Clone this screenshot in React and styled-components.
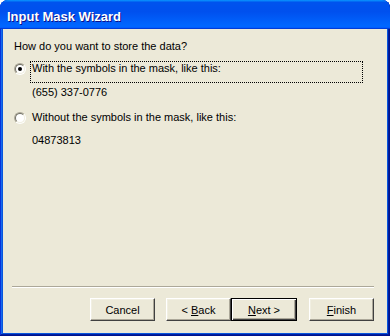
import React from 'react';
import styled, { createGlobalStyle } from 'styled-components';

const Global = createGlobalStyle`
  html, body { margin: 0; padding: 0; background: #ffffff; }
  body { font-family: "Liberation Sans", Arial, sans-serif; }
`;

const Window = styled.div`
  width: 390px;
  height: 336px;
  display: flex;
  flex-direction: column;
  background: #0855dd;
  border-radius: 8px 8px 0 0;
  box-shadow: inset -1px -1px #00138c, inset 1px 1px #0831d9,
    inset -2px -2px #001ea0, inset 2px 2px #166aee;
`;

const TitleBar = styled.div`
  flex: none;
  height: 29px;
  border-radius: 8px 8px 0 0;
  background: linear-gradient(180deg, #0997ff, #0053ee 8%, #0050ee 40%, #0066ff 88%, #0066ff 93%, #005bff 95%, #003dd7 96%, #003dd7);
  display: flex;
  align-items: center;
  padding: 3px 0 0 7px;
  box-sizing: border-box;
  color: #ffffff;
  font: bold 13px "Liberation Sans", sans-serif;
  text-shadow: 1px 1px #0f1089;
`;

const Body = styled.div`
  flex: 1;
  margin: 0 3px 3px 3px;
  background: #ece9d8;
  display: flex;
  flex-direction: column;
  font-size: 11px;
  line-height: 13px;
  color: #000000;
`;

const Content = styled.div`
  flex: 1;
  padding: 11px 0 0 11px;
  display: flex;
  flex-direction: column;
`;

const Question = styled.div`
  height: 13px;
`;

const OptionRow = styled.div`
  display: flex;
  align-items: flex-start;
  margin-top: ${(p) => p.$top}px;
`;

const Radio = styled.span`
  flex: none;
  width: 12px;
  height: 12px;
  box-sizing: border-box;
  margin-top: 2px;
  border-radius: 50%;
  border: 1px solid;
  border-color: #aca899 #ffffff #ffffff #aca899;
  display: flex;
`;

const RadioInner = styled.span`
  flex: 1;
  border-radius: 50%;
  border: 1px solid;
  border-color: #716f64 #f1efe2 #f1efe2 #716f64;
  background: #ffffff;
  display: flex;
  align-items: center;
  justify-content: center;
`;

const Dot = styled.span`
  width: 4px;
  height: 4px;
  border-radius: 50%;
  background: ${(p) => (p.$on ? '#000000' : 'transparent')};
`;

const Label = styled.span`
  margin-left: 4px;
  width: 330px;
  height: 20px;
  padding: 0 0 0 1px;
  border: 1px dotted ${(p) => (p.$focus ? '#000000' : 'transparent')};
`;

const Sample = styled.div`
  margin: ${(p) => p.$top}px 0 0 18px;
  height: 13px;
`;

const Separator = styled.div`
  margin: 0 13px 0 9px;
  height: 1px;
  background: #aca899;
  border-bottom: 1px solid #ffffff;
`;

const Footer = styled.div`
  display: flex;
  justify-content: flex-end;
  padding: 10px 13px 12px 0;
`;

const Button = styled.button`
  width: ${(p) => p.$w || 65}px;
  height: 23px;
  margin-left: ${(p) => p.$gap || 0}px;
  padding: 0;
  box-sizing: border-box;
  background: #ece9d8;
  font-family: "Liberation Sans", Arial, sans-serif;
  font-size: 11px;
  color: #000000;
  border: 1px solid;
  border-color: ${(p) => (p.$default ? '#000000' : '#ffffff #404040 #404040 #ffffff')};
  box-shadow: ${(p) =>
    p.$default
      ? 'inset 1px 1px #ffffff, inset -1px -1px #404040, inset -2px -2px #aca899'
      : 'inset -1px -1px #aca899, inset 1px 1px #f1efe2'};
  u { text-decoration: underline; }
`;

export default function App() {
  return (
    <>
      <Global />
      <Window>
        <TitleBar>Input Mask Wizard</TitleBar>
        <Body>
          <Content>
            <Question>How do you want to store the data?</Question>
            <OptionRow $top={8}>
              <Radio><RadioInner><Dot $on /></RadioInner></Radio>
              <Label $focus>With the symbols in the mask, like this:</Label>
            </OptionRow>
            <Sample $top={3}>(655) 337-0776</Sample>
            <OptionRow $top={11}>
              <Radio><RadioInner><Dot /></RadioInner></Radio>
              <Label>Without the symbols in the mask, like this:</Label>
            </OptionRow>
            <Sample $top={2}>04873813</Sample>
          </Content>
          <Separator />
          <Footer>
            <Button>Cancel</Button>
            <Button $gap={11}>&lt; <u>B</u>ack</Button>
            <Button $w={66} $default><u>N</u>ext &gt;</Button>
            <Button $gap={12}><u>F</u>inish</Button>
          </Footer>
        </Body>
      </Window>
    </>
  );
}
